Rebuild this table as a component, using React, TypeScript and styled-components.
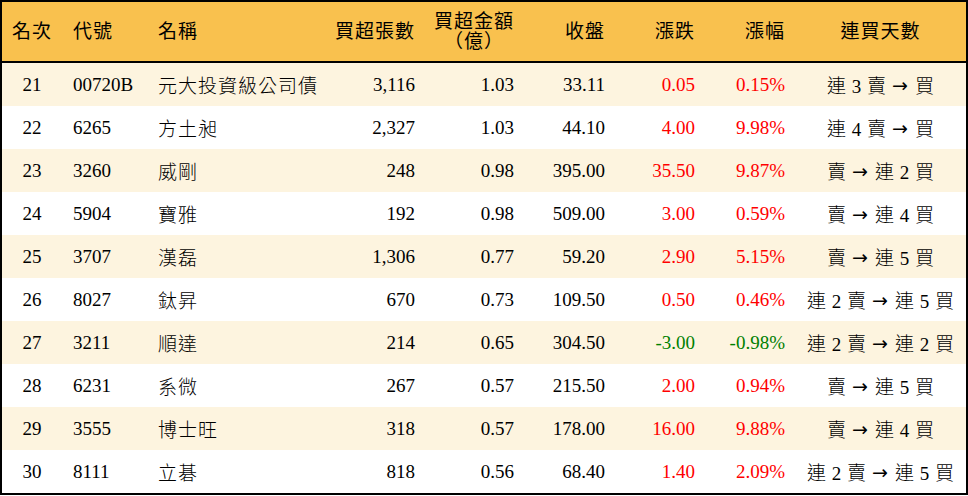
import * as React from "react";
import styled, { createGlobalStyle } from "styled-components";

const GlobalStyle = createGlobalStyle`
  html, body {
    margin: 0;
    padding: 0;
    background: #ffffff;
  }
  body {
    font-family: "Liberation Serif", "Noto Sans CJK TC", serif;
    font-weight: 300;
    color: #000;
  }
`;

const COLS = "60px 86px 182px 95px 99px 91px 90px 90px 1fr";

type Stock = {
  rank: number;
  code: string;
  name: string;
  lots: string;
  amount: string;
  close: string;
  change: string;
  pct: string;
  days: string;
};

const rows: Stock[] = [
  { rank: 21, code: "00720B", name: "元大投資級公司債", lots: "3,116", amount: "1.03", close: "33.11", change: "0.05", pct: "0.15%", days: "連 3 賣 → 買" },
  { rank: 22, code: "6265", name: "方土昶", lots: "2,327", amount: "1.03", close: "44.10", change: "4.00", pct: "9.98%", days: "連 4 賣 → 買" },
  { rank: 23, code: "3260", name: "威剛", lots: "248", amount: "0.98", close: "395.00", change: "35.50", pct: "9.87%", days: "賣 → 連 2 買" },
  { rank: 24, code: "5904", name: "寶雅", lots: "192", amount: "0.98", close: "509.00", change: "3.00", pct: "0.59%", days: "賣 → 連 4 買" },
  { rank: 25, code: "3707", name: "漢磊", lots: "1,306", amount: "0.77", close: "59.20", change: "2.90", pct: "5.15%", days: "賣 → 連 5 買" },
  { rank: 26, code: "8027", name: "鈦昇", lots: "670", amount: "0.73", close: "109.50", change: "0.50", pct: "0.46%", days: "連 2 賣 → 連 5 買" },
  { rank: 27, code: "3211", name: "順達", lots: "214", amount: "0.65", close: "304.50", change: "-3.00", pct: "-0.98%", days: "連 2 賣 → 連 2 買" },
  { rank: 28, code: "6231", name: "系微", lots: "267", amount: "0.57", close: "215.50", change: "2.00", pct: "0.94%", days: "賣 → 連 5 買" },
  { rank: 29, code: "3555", name: "博士旺", lots: "318", amount: "0.57", close: "178.00", change: "16.00", pct: "9.88%", days: "賣 → 連 4 買" },
  { rank: 30, code: "8111", name: "立碁", lots: "818", amount: "0.56", close: "68.40", change: "1.40", pct: "2.09%", days: "連 2 賣 → 連 5 買" },
];

const Table = styled.div`
  width: 968px;
  box-sizing: border-box;
  border: 2px solid #000;
  font-size: 19px;
`;

const HeaderRow = styled.div`
  display: grid;
  grid-template-columns: ${COLS};
  height: 61px;
  box-sizing: border-box;
  background: #f9c14e;
  border-bottom: 2px solid #000;
`;

const Row = styled.div<{ $alt?: boolean }>`
  display: grid;
  grid-template-columns: ${COLS};
  height: 43px;
  background: ${(p) => (p.$alt ? "#fdf4df" : "#ffffff")};
`;

type Align = "left" | "right" | "center";

const Cell = styled.div<{ $align?: Align; $tone?: "up" | "down" }>`
  display: flex;
  align-items: center;
  justify-content: ${(p) =>
    p.$align === "right" ? "flex-end" : p.$align === "center" ? "center" : "flex-start"};
  text-align: ${(p) => p.$align || "left"};
  padding: 0 10px;
  white-space: nowrap;
  color: ${(p) => (p.$tone === "up" ? "#ff0000" : p.$tone === "down" ? "#008000" : "#000")};
`;

const HeadCell = styled(Cell)`
  letter-spacing: 1px;
  line-height: 20px;
  font-weight: 400;
`;

const NameCell = styled(Cell)`
  letter-spacing: 1px;
`;

const CodeCell = styled(Cell)`
  padding-left: 11px;
`;

const DaysCell = styled(Cell)`
  white-space: pre;
  word-spacing: 1px;
`;

const Arrow = styled.span`
  display: inline-block;
  font-family: "DejaVu Sans", sans-serif;
  font-weight: 400;
  font-size: 19px;
  margin: 0 7px 0 6px;
`;

const Stack = styled.div`
  display: flex;
  flex-direction: column;
  align-items: center;
`;

const App: React.FC = () => {
  return (
    <>
      <GlobalStyle />
      <Table>
        <HeaderRow>
          <HeadCell $align="center">名次</HeadCell>
          <CodeCell as={HeadCell}>代號</CodeCell>
          <HeadCell>名稱</HeadCell>
          <HeadCell $align="right">買超張數</HeadCell>
          <HeadCell $align="right">
            <Stack>
              <span>買超金額</span>
              <span>（億）</span>
            </Stack>
          </HeadCell>
          <HeadCell $align="right">收盤</HeadCell>
          <HeadCell $align="right">漲跌</HeadCell>
          <HeadCell $align="right">漲幅</HeadCell>
          <HeadCell $align="center">連買天數</HeadCell>
        </HeaderRow>
        {rows.map((r, i) => {
          const tone = r.change.startsWith("-") ? "down" : "up";
          const [from, to] = r.days.split(" → ");
          return (
            <Row key={r.rank} $alt={i % 2 === 0}>
              <Cell $align="center">{r.rank}</Cell>
              <CodeCell>{r.code}</CodeCell>
              <NameCell>{r.name}</NameCell>
              <Cell $align="right">{r.lots}</Cell>
              <Cell $align="right">{r.amount}</Cell>
              <Cell $align="right">{r.close}</Cell>
              <Cell $align="right" $tone={tone}>{r.change}</Cell>
              <Cell $align="right" $tone={tone}>{r.pct}</Cell>
              <DaysCell $align="center">
                <span>{from}</span>
                <Arrow>→</Arrow>
                <span>{to}</span>
              </DaysCell>
            </Row>
          );
        })}
      </Table>
    </>
  );
};

export default App;
